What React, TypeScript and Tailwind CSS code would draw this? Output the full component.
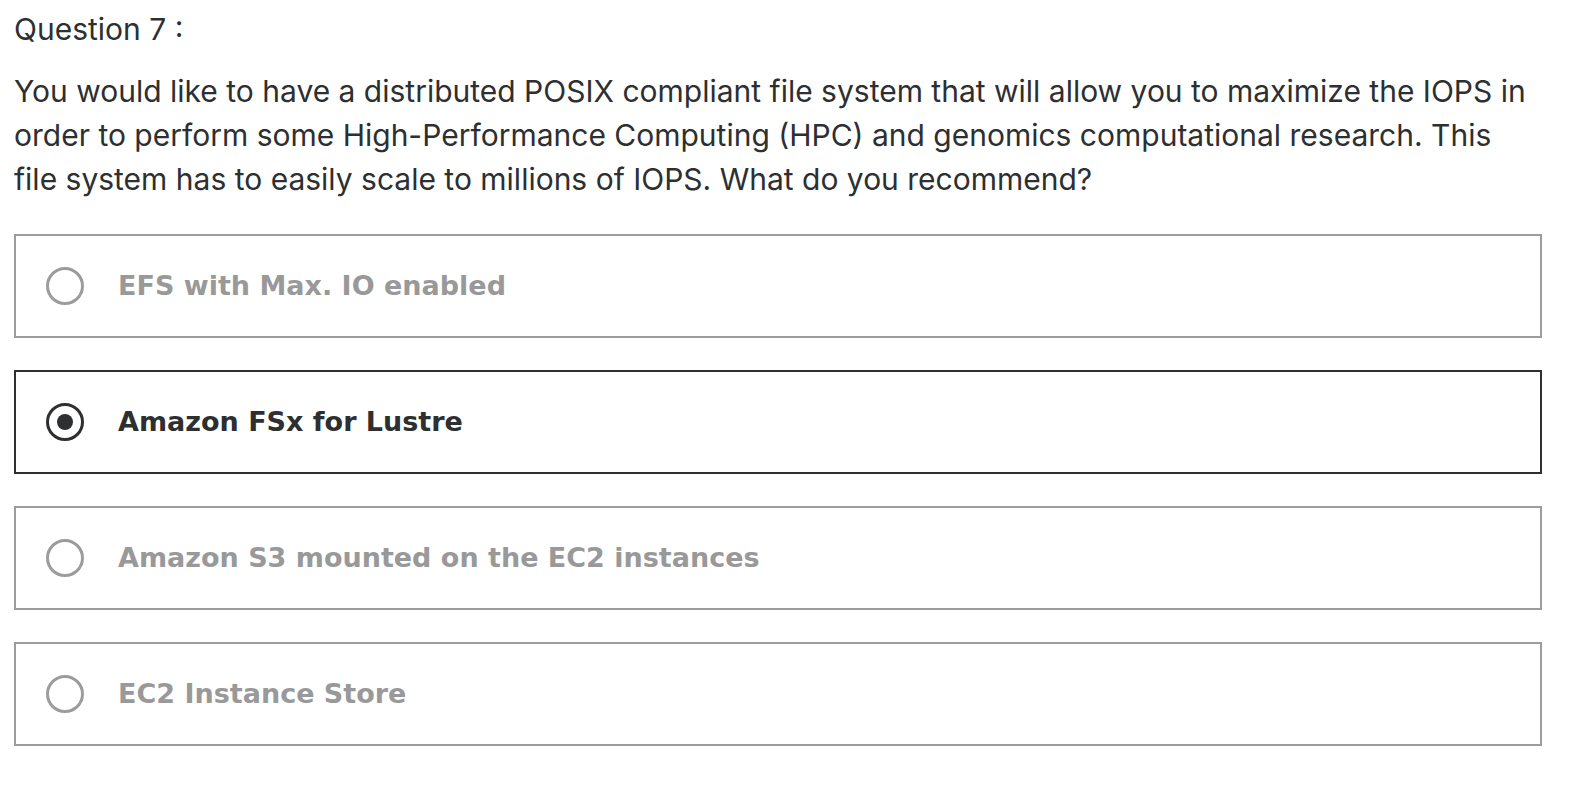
import React from "react";

const options = [
  { label: "EFS with Max. IO enabled", selected: false },
  { label: "Amazon FSx for Lustre", selected: true },
  { label: "Amazon S3 mounted on the EC2 instances", selected: false },
  { label: "EC2 Instance Store", selected: false },
];

export default function App() {
  return (
    <div
      className="min-h-screen bg-white pl-[14px] pr-[52px] text-[#2d2f31]"
      style={{ fontFamily: 'Inter, "Liberation Sans", Arial, sans-serif' }}
    >
      <div className="pt-[7px] text-[30px] leading-[44px]">Question 7 :</div>
      <p className="mt-[18px] mr-[6px] text-[30px] leading-[44px]">
        You would like to have a distributed POSIX compliant file system that will allow you to maximize the IOPS in
        order to perform some High-Performance Computing (HPC) and genomics computational research. This file system
        has to easily scale to millions of IOPS. What do you recommend?
      </p>
      <div className="mt-[33px] flex flex-col gap-[32px]">
        {options.map((o) => (
          <div
            key={o.label}
            className={
              o.selected
                ? "flex h-[104px] items-center border-2 border-[#2d2f31] pl-[30px]"
                : "flex h-[104px] items-center border-2 border-[#9c9c9c] pl-[30px]"
            }
          >
            {o.selected ? (
              <span className="flex h-[38px] w-[38px] shrink-0 items-center justify-center rounded-full border-[3.5px] border-[#2d2f31]">
                <span className="h-[16px] w-[16px] rounded-full bg-[#2d2f31]" />
              </span>
            ) : (
              <span className="h-[38px] w-[38px] shrink-0 rounded-full border-[3px] border-[#9c9c9c]" />
            )}
            <span
              className={
                o.selected
                  ? "ml-[34px] text-[27px] font-bold text-[#2d2f31]"
                  : "ml-[34px] text-[27px] font-bold text-[#999999]"
              }
              style={{ fontFamily: '"DejaVu Sans", Inter, sans-serif' }}
            >
              {o.label}
            </span>
          </div>
        ))}
      </div>
    </div>
  );
}
